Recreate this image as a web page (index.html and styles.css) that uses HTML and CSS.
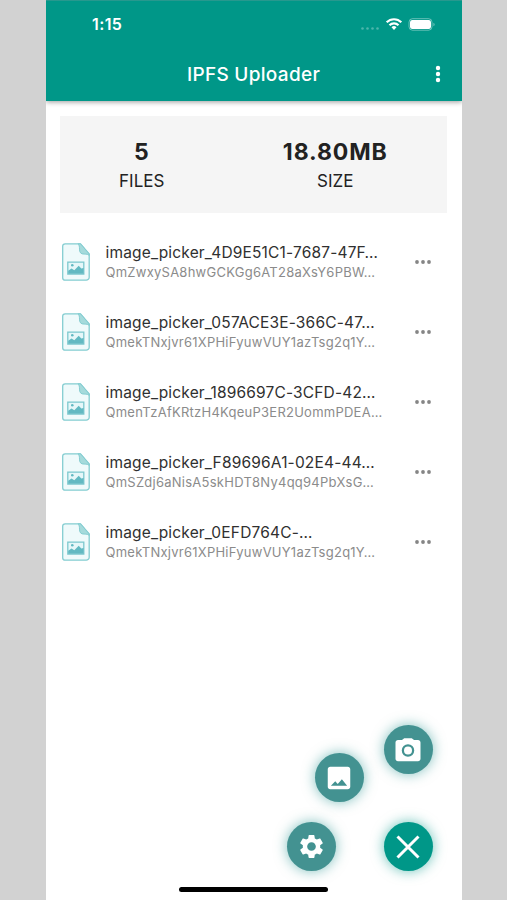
FILE: index.html
```
<!DOCTYPE html>
<html lang="en">
<head>
    <meta charset="UTF-8">
    <meta name="viewport" content="width=device-width, initial-scale=1.0">
    <title>IPFS Uploader</title>
    <link rel="stylesheet" href="styles.css">
</head>
<body>
    <!-- Shared icons -->
    <svg class="sprite" width="0" height="0">
        <symbol id="icon-file" viewBox="0 0 28 38">
            <path d="M3.2.8h15.3l8.700 10.200v23.200a3 3 0 0 1-3 3H3.200a2.500 2.500 0 0 1-2.500-2.500V3.300A2.500 2.500 0 0 1 3.200.8z" fill="#effafb" stroke="#84cdd1" stroke-width="1.300"/>
            <path d="M16 .8h2.500l8.700 10.200v1.500c-1-1.200-2.500-1.400-5-1.400-3.400 0-4.700-1.500-4.700-5C17.500 3.400 17.200 2 16 .8z" fill="#a5dadb" stroke="#84cdd1"/>
            <path d="M5.800 19.100h16v12h-16z" fill="#e6f7f9" stroke="#7cc8ce" stroke-width="1.300"/>
            <circle cx="10.300" cy="22.300" r="1.300" fill="#62b9c2"/>
            <path d="M6.200 30.700v-3l3.300-2.200 2.800 1.800 4.400-4.600 2.600 2.700 2.300-.4v5.700z" fill="#62b9c2"/>
        </symbol>
        <symbol id="icon-more" viewBox="0 0 16 4">
            <circle cx="2" cy="2" r="1.900"/>
            <circle cx="8" cy="2" r="1.900"/>
            <circle cx="14" cy="2" r="1.900"/>
        </symbol>
    </svg>

    <div class="phone">
        <header>
            <div class="status-bar">
                <span class="time">1:15</span>
                <svg class="status-icons" width="76" height="16" viewBox="0 0 76 16">
                    <g fill="#fff" opacity=".3">
                        <circle cx="2.500" cy="12.500" r="1.300"/>
                        <circle cx="7.500" cy="12.500" r="1.300"/>
                        <circle cx="12.500" cy="12.500" r="1.300"/>
                        <circle cx="17.500" cy="12.500" r="1.300"/>
                    </g>
                    <g fill="none" stroke="#fff" stroke-width="2.200">
                        <path d="M26.700 6.300a10.300 10.300 0 0 1 14.600 0"/>
                        <path d="M29.500 9.300a6.400 6.400 0 0 1 9 0"/>
                    </g>
                    <path d="M31.500 11.300a3.600 3.600 0 0 1 5 0L34 14z" fill="#fff"/>
                    <rect x="49" y="2.700" width="23" height="11.500" rx="3.500" fill="none" stroke="#fff" opacity=".4"/>
                    <rect x="50" y="3.900" width="21" height="9.200" rx="2.300" fill="#fff"/>
                    <path d="M73.500 6.700v3.600c1.400-.6 1.400-3 0-3.600z" fill="#fff" opacity=".5"/>
                </svg>
            </div>
            <div class="app-bar">
                <h1>IPFS Uploader</h1>
                <svg class="menu" width="6" height="18" viewBox="0 0 6 18" fill="#fff">
                    <circle cx="3" cy="3" r="2.200"/>
                    <circle cx="3" cy="9" r="2.200"/>
                    <circle cx="3" cy="15" r="2.200"/>
                </svg>
            </div>
        </header>

        <section class="summary">
            <div class="stat">
                <div class="value">5</div>
                <div class="label">FILES</div>
            </div>
            <div class="stat">
                <div class="value">18.80MB</div>
                <div class="label">SIZE</div>
            </div>
        </section>

        <ul class="files">
            <li class="file">
                <svg class="file-icon"><use href="#icon-file"/></svg>
                <div class="file-text">
                    <div class="name">image_picker_4D9E51C1-7687-47F…</div>
                    <div class="hash">QmZwxySA8hwGCKGg6AT28aXsY6PBW…</div>
                </div>
                <svg class="more"><use href="#icon-more"/></svg>
            </li>
            <li class="file">
                <svg class="file-icon"><use href="#icon-file"/></svg>
                <div class="file-text">
                    <div class="name">image_picker_057ACE3E-366C-47…</div>
                    <div class="hash">QmekTNxjvr61XPHiFyuwVUY1azTsg2q1Y…</div>
                </div>
                <svg class="more"><use href="#icon-more"/></svg>
            </li>
            <li class="file">
                <svg class="file-icon"><use href="#icon-file"/></svg>
                <div class="file-text">
                    <div class="name">image_picker_1896697C-3CFD-42…</div>
                    <div class="hash">QmenTzAfKRtzH4KqeuP3ER2UommPDEA…</div>
                </div>
                <svg class="more"><use href="#icon-more"/></svg>
            </li>
            <li class="file">
                <svg class="file-icon"><use href="#icon-file"/></svg>
                <div class="file-text">
                    <div class="name">image_picker_F89696A1-02E4-44…</div>
                    <div class="hash">QmSZdj6aNisA5skHDT8Ny4qq94PbXsG…</div>
                </div>
                <svg class="more"><use href="#icon-more"/></svg>
            </li>
            <li class="file">
                <svg class="file-icon"><use href="#icon-file"/></svg>
                <div class="file-text">
                    <div class="name">image_picker_0EFD764C-…</div>
                    <div class="hash">QmekTNxjvr61XPHiFyuwVUY1azTsg2q1Y…</div>
                </div>
                <svg class="more"><use href="#icon-more"/></svg>
            </li>
        </ul>

        <!-- Floating menu, opened -->
        <div class="fab camera">
            <svg width="30" height="30" viewBox="0 0 24 24">
                <path fill="#fff" fill-rule="evenodd" d="M9 2.600 7.170 4H4c-1.100 0-2 .9-2 2v13c0 1.100.9 2 2 2h16c1.100 0 2-.9 2-2V6c0-1.100-.9-2-2-2h-3.170L15 2.600H9zm3 14.800a5 5 0 1 1 0-10 5 5 0 0 1 0 10zm0-1.800a3.200 3.200 0 1 0 0-6.400 3.200 3.200 0 0 0 0 6.400z"/>
            </svg>
        </div>
        <div class="fab gallery">
            <svg width="30" height="30" viewBox="0 0 24 24">
                <path fill="#fff" d="M21 19V5c0-1.100-.9-2-2-2H5c-1.100 0-2 .9-2 2v14c0 1.100.9 2 2 2h14c1.100 0 2-.9 2-2zM9 14.500l2 2.200L14.300 13l4.200 5.200h-13L9 14.500z"/>
            </svg>
        </div>
        <div class="fab settings">
            <svg width="29" height="29" viewBox="0 0 24 24">
                <path fill="#fff" d="M19.140 12.940c.04-.3.060-.61.060-.94 0-.32-.02-.64-.07-.94l2.030-1.580c.18-.14.230-.41.120-.61l-1.920-3.320c-.12-.22-.37-.29-.59-.22l-2.390.96c-.5-.38-1.030-.7-1.620-.94l-.36-2.540c-.04-.24-.24-.41-.48-.41h-3.840c-.24 0-.43.170-.47.410l-.36 2.540c-.59.240-1.130.570-1.620.940l-2.390-.96c-.22-.08-.47 0-.59.220L2.740 8.870c-.12.210-.08.470.120.610l2.030 1.580c-.05.300-.09.630-.09.940s.020.640.070.940l-2.030 1.580c-.18.140-.23.410-.12.610l1.920 3.320c.12.220.370.290.590.220l2.390-.96c.5.380 1.030.700 1.620.940l.36 2.540c.05.240.240.410.480.410h3.840c.24 0 .44-.17.470-.41l.36-2.540c.59-.24 1.130-.56 1.620-.94l2.390.96c.22.080.470 0 .59-.22l1.920-3.320c.12-.22.070-.47-.12-.61l-2.010-1.580zM12 15.600c-1.980 0-3.600-1.620-3.600-3.600s1.620-3.600 3.600-3.600 3.600 1.620 3.600 3.600-1.620 3.600-3.600 3.600z"/>
            </svg>
        </div>
        <div class="fab close">
            <svg width="24" height="24" viewBox="0 0 24 24">
                <path d="M1.500 1.500l21 21M22.500 1.500l-21 21" stroke="#fff" stroke-width="3"/>
            </svg>
        </div>
        <div class="home-indicator"></div>
    </div>
</body>
</html>
```
FILE: styles.css
```
* {
    box-sizing: border-box;
}

body {
    margin: 0;
    height: 100vh;
    overflow: hidden;
    background-color: #d2d2d2;
    font-family: Inter, "Liberation Sans", sans-serif;
}

.sprite {
    position: absolute;
}

.phone {
    position: relative;
    width: 416px;
    height: 900px;
    margin-left: 46px;
    background-color: #fff;
}

header {
    height: 101px;
    background-color: #009788;
    border-top: 1px solid #27988e;
    color: #fff;
    box-shadow: 0 1px 5px rgba(0, 0, 0, 0.4);
    clip-path: inset(0 0 -10px 0);
}

.status-bar {
    display: flex;
    justify-content: space-between;
    align-items: center;
    height: 46px;
    padding: 0 26px 0 46px;
}

.time {
    font-size: 16px;
    font-weight: 600;
    letter-spacing: 0.4px;
}

.app-bar {
    display: grid;
    grid-template-columns: 1fr auto 1fr;
    align-items: center;
    height: 54px;
    padding-right: 21px;
    padding-left: 20px;
}

h1 {
    grid-column: 2;
    margin: 0;
    font-size: 19px;
    font-weight: 500;
    letter-spacing: 0.3px;
}

.menu {
    justify-self: end;
}

.summary {
    display: flex;
    height: 97px;
    margin: 15px 15px 0 14px;
    padding-top: 21px;
    background-color: #f5f5f5;
    text-align: center;
    color: #222;
}

.stat {
    flex: 1;
    padding-right: 30px;
}

.value {
    font-size: 23px;
    line-height: 30px;
    font-weight: 700;
    letter-spacing: 0.9px;
}

.label {
    font-size: 17px;
    line-height: 28px;
}

.files {
    list-style: none;
    margin: 14px 0 0;
    padding: 0;
}

.file {
    display: flex;
    align-items: center;
    height: 70px;
    padding: 0 31px 0 16px;
}

.file-icon {
    width: 28px;
    height: 38px;
}

.file-text {
    flex: 1;
    margin-left: 15.5px;
    white-space: nowrap;
}

.name {
    font-size: 15.5px;
    line-height: 21px;
    letter-spacing: 0.17px;
    color: #303030;
}

.hash {
    font-size: 13px;
    line-height: 19px;
    letter-spacing: 0.25px;
    color: #8b8b8b;
}

.more {
    width: 16px;
    height: 4px;
    fill: #858585;
}

/* Buttons fan out around the close button */
.fab {
    position: absolute;
    display: flex;
    justify-content: center;
    align-items: center;
    width: 49px;
    height: 49px;
    padding-right: 1px;
    border-radius: 50%;
    background-color: #439291;
    box-shadow: 0 0 13px rgba(0, 130, 125, 0.5);
}

.camera {
    left: 338px;
    top: 725px;
}

.gallery {
    left: 269px;
    top: 753px;
}

.settings {
    left: 241px;
    top: 822px;
}

.close {
    left: 338px;
    top: 822px;
    background-color: #009788;
    box-shadow: 0 0 13px rgba(0, 151, 136, 0.6);
}

.home-indicator {
    position: absolute;
    left: 133px;
    bottom: 8px;
    width: 149px;
    height: 5px;
    border-radius: 3px;
    background-color: #000;
}
```
